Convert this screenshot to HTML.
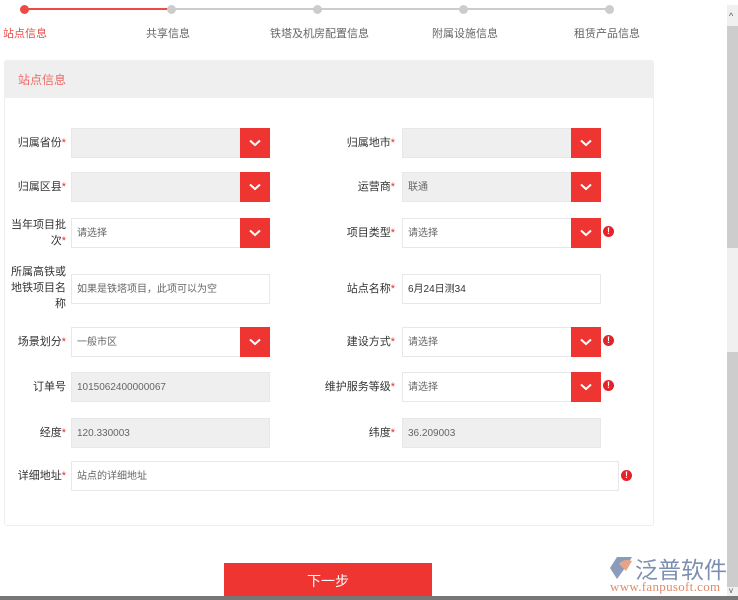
<!DOCTYPE html>
<html><head><meta charset="utf-8"><style>
*{margin:0;padding:0;box-sizing:border-box}
body{width:738px;height:600px;overflow:hidden;background:#fff;font-family:"Liberation Sans","Noto Sans CJK SC",sans-serif;font-size:11px;color:#333;position:relative}
.a{position:absolute}
.dot{position:absolute;top:5px;width:9px;height:9px;border-radius:50%;background:#ccc}
.st{position:absolute;top:25px;font-size:11px;color:#666;white-space:nowrap}
.lbl{position:absolute;text-align:right;font-size:11px;color:#333;line-height:16px}
.lbl i{color:#e3322f;font-style:normal}
.in{position:absolute;height:30px;border:1px solid #e8e8e8;background:#fff;font-size:10px;color:#666;line-height:29px;padding-left:5px;white-space:nowrap}
.g{background:#efefef}
.btn{position:absolute;width:30px;height:30px;background:#ee3531}
.btn svg{position:absolute;left:9px;top:11px}
.err{position:absolute;width:11px;height:11px;border-radius:50%;background:#e3232a;color:#fff;font-size:9px;font-weight:bold;line-height:11px;text-align:center}
</style></head><body>
<div class="a" style="left:24px;top:8px;width:585px;height:2px;background:#ccc"></div>
<div class="a" style="left:24px;top:8px;width:147px;height:2px;background:#ee4a45"></div>
<div class="dot" style="left:20px;background:#ee4a45"></div>
<div class="dot" style="left:167px"></div>
<div class="dot" style="left:313px"></div>
<div class="dot" style="left:459px"></div>
<div class="dot" style="left:605px"></div>
<div class="st" style="left:3px;color:#ee4a45">站点信息</div>
<div class="st" style="left:146px">共享信息</div>
<div class="st" style="left:270px">铁塔及机房配置信息</div>
<div class="st" style="left:432px">附属设施信息</div>
<div class="st" style="left:574px">租赁产品信息</div>

<div class="a" style="left:4px;top:60px;width:650px;height:466px;border:1px solid #eee;border-radius:3px"></div>
<div class="a" style="left:4px;top:60px;width:650px;height:38px;background:#efefef;border-radius:3px 3px 0 0"></div>
<div class="a" style="left:18px;top:71px;font-size:12px;color:#ee6a66">站点信息</div>

<div class="lbl" style="left:0;width:66px;top:135px">归属省份<i>*</i></div>
<div class="in g" style="left:71px;top:128px;width:170px"></div><div class="btn" style="left:240px;top:128px"><svg width="12" height="8"><path d="M1 1.5L6 6L11 1.5" stroke="#fff" stroke-width="2" fill="none"/></svg></div>
<div class="lbl" style="left:300px;width:95px;top:135px">归属地市<i>*</i></div>
<div class="in g" style="left:402px;top:128px;width:170px"></div><div class="btn" style="left:571px;top:128px"><svg width="12" height="8"><path d="M1 1.5L6 6L11 1.5" stroke="#fff" stroke-width="2" fill="none"/></svg></div>

<div class="lbl" style="left:0;width:66px;top:179px">归属区县<i>*</i></div>
<div class="in g" style="left:71px;top:172px;width:170px"></div><div class="btn" style="left:240px;top:172px"><svg width="12" height="8"><path d="M1 1.5L6 6L11 1.5" stroke="#fff" stroke-width="2" fill="none"/></svg></div>
<div class="lbl" style="left:300px;width:95px;top:179px">运营商<i>*</i></div>
<div class="in g" style="left:402px;top:172px;width:170px">联通</div><div class="btn" style="left:571px;top:172px"><svg width="12" height="8"><path d="M1 1.5L6 6L11 1.5" stroke="#fff" stroke-width="2" fill="none"/></svg></div>

<div class="lbl" style="left:0;width:66px;top:217px">当年项目批<br>次<i>*</i></div>
<div class="in" style="left:71px;top:218px;width:170px">请选择</div><div class="btn" style="left:240px;top:218px"><svg width="12" height="8"><path d="M1 1.5L6 6L11 1.5" stroke="#fff" stroke-width="2" fill="none"/></svg></div>
<div class="lbl" style="left:300px;width:95px;top:225px">项目类型<i>*</i></div>
<div class="in" style="left:402px;top:218px;width:170px">请选择</div><div class="btn" style="left:571px;top:218px"><svg width="12" height="8"><path d="M1 1.5L6 6L11 1.5" stroke="#fff" stroke-width="2" fill="none"/></svg></div>
<div class="err" style="left:603px;top:226px">!</div>

<div class="lbl" style="left:0;width:66px;top:264px">所属高铁或<br>地铁项目名<br>称</div>
<div class="in" style="left:71px;top:274px;width:199px">如果是铁塔项目，此项可以为空</div>
<div class="lbl" style="left:300px;width:95px;top:281px">站点名称<i>*</i></div>
<div class="in" style="left:402px;top:274px;width:199px;color:#333">6月24日测34</div>

<div class="lbl" style="left:0;width:66px;top:334px">场景划分<i>*</i></div>
<div class="in" style="left:71px;top:327px;width:170px">一般市区</div><div class="btn" style="left:240px;top:327px"><svg width="12" height="8"><path d="M1 1.5L6 6L11 1.5" stroke="#fff" stroke-width="2" fill="none"/></svg></div>
<div class="lbl" style="left:300px;width:95px;top:334px">建设方式<i>*</i></div>
<div class="in" style="left:402px;top:327px;width:170px">请选择</div><div class="btn" style="left:571px;top:327px"><svg width="12" height="8"><path d="M1 1.5L6 6L11 1.5" stroke="#fff" stroke-width="2" fill="none"/></svg></div>
<div class="err" style="left:603px;top:335px">!</div>

<div class="lbl" style="left:0;width:66px;top:379px">订单号</div>
<div class="in g" style="left:71px;top:372px;width:199px">1015062400000067</div>
<div class="lbl" style="left:300px;width:95px;top:379px">维护服务等级<i>*</i></div>
<div class="in" style="left:402px;top:372px;width:170px">请选择</div><div class="btn" style="left:571px;top:372px"><svg width="12" height="8"><path d="M1 1.5L6 6L11 1.5" stroke="#fff" stroke-width="2" fill="none"/></svg></div>
<div class="err" style="left:603px;top:380px">!</div>

<div class="lbl" style="left:0;width:66px;top:425px">经度<i>*</i></div>
<div class="in g" style="left:71px;top:418px;width:199px">120.330003</div>
<div class="lbl" style="left:300px;width:95px;top:425px">纬度<i>*</i></div>
<div class="in g" style="left:402px;top:418px;width:199px">36.209003</div>

<div class="lbl" style="left:0;width:66px;top:468px">详细地址<i>*</i></div>
<div class="in" style="left:71px;top:461px;width:548px">站点的详细地址</div>
<div class="err" style="left:621px;top:470px">!</div>

<div class="a" style="left:224px;top:563px;width:208px;height:36px;background:#ee3531;color:#fff;font-size:14px;text-align:center;line-height:36px">下一步</div>

<div class="a" style="left:608px;top:555px;width:26px;height:26px">
<svg width="26" height="26"><path d="M2 13L9 2H24L17 13L9 24Z" fill="#8a9bbb"/><path d="M11 9Q16 3 24 6L18 16Q14 12 11 9Z" fill="#e7a486"/></svg></div>
<div class="a" style="left:635px;top:551px;font-size:23px;color:#7d8fb0;letter-spacing:0px">泛普软件</div>
<div class="a" style="left:610px;top:579px;font-family:'Liberation Serif',serif;font-size:13px;color:#e08a6a;letter-spacing:0.3px">www.fanpusoft.com</div>

<div class="a" style="left:727px;top:5px;width:11px;height:595px;background:#f0f0f0"></div>
<div class="a" style="left:727px;top:26px;width:11px;height:222px;background:#cdcdcd"></div>
<div class="a" style="left:727px;top:352px;width:11px;height:235px;background:#cdcdcd"></div>
<div class="a" style="left:729px;top:11px;font-size:9px;color:#555">^</div>
<div class="a" style="left:729px;top:586px;font-size:8px;color:#555">v</div>
<div class="a" style="left:0;top:596px;width:738px;height:4px;background:#777"></div>
</body></html>
